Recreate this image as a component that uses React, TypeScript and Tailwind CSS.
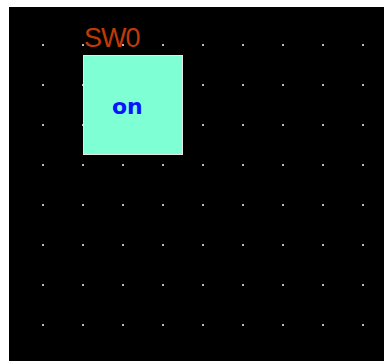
const cols = Array.from({ length: 9 }, (_, i) => 33 + i * 40);
const rows = Array.from({ length: 8 }, (_, i) => 37 + i * 40);

function Switch({ name, on }: { name: string; on: boolean }) {
  return (
    <div className="absolute left-[74px] top-[14px] flex flex-col items-start">
      <span
        className="ml-[1px] h-[34px] text-[27px] leading-[34px] text-[#c03a06] tracking-[-1px]"
        style={{ fontFamily: '"Liberation Sans", Arial, sans-serif' }}
      >
        {name}
      </span>
      <div className="h-[100px] w-[100px] border border-[#e8e8e8] bg-[#7fffd4] pl-[28px] pt-[40px]">
        <span
          className="block text-[22px] font-bold leading-none text-[#0a14ff]"
          style={{ fontFamily: '"DejaVu Sans", Verdana, sans-serif' }}
        >
          {on ? 'on' : 'off'}
        </span>
      </div>
    </div>
  );
}

export default function App() {
  return (
    <div className="h-[361px] w-[384px] bg-white pl-[9px] pt-[7px]">
      <div className="relative h-[354px] w-[375px] overflow-hidden bg-black">
        <svg className="absolute inset-0" width={375} height={354}>
          {rows.map((y) =>
            cols.map((x) => (
              <rect key={`${x}-${y}`} x={x} y={y} width={2} height={2} fill="#b8b8b8" />
            ))
          )}
        </svg>
        <Switch name="SW0" on />
      </div>
    </div>
  );
}
